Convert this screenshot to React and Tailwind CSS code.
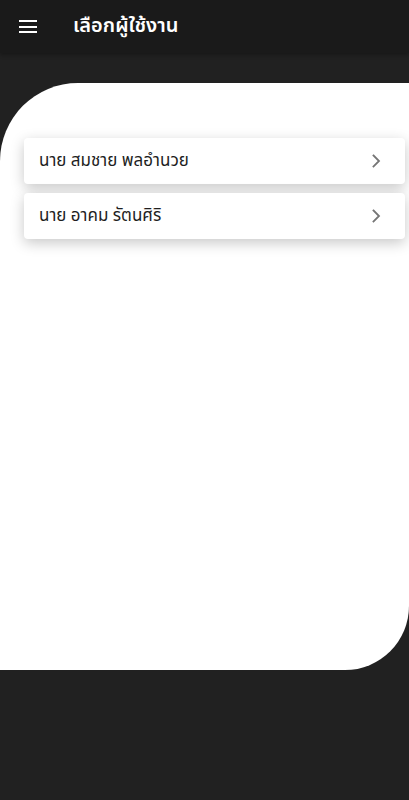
import React from "react";

function Chevron() {
  return (
    <svg width="10" height="14" viewBox="0 0 10 14" fill="none">
      <path d="M2.5 1.5 L8 7 L2.5 12.5" stroke="#757575" strokeWidth="1.8" strokeLinecap="square" />
    </svg>
  );
}

const users = ["นาย สมชาย พลอำนวย", "นาย อาคม รัตนศิริ"];

export default function App() {
  return (
    <div
      className="w-[409px] h-[800px] bg-[#212121] flex flex-col overflow-hidden"
      style={{ fontFamily: '"Noto Sans Thai", "Noto Sans Thai UI", "Noto Sans", sans-serif' }}
    >
      <div className="h-[53px] bg-[#1a1a1a] flex items-center shadow-[0_2px_4px_rgba(0,0,0,0.3)] relative z-10">
        <div className="w-[72px] pl-[19px] flex flex-col gap-[3.5px]">
          <div className="w-[18px] h-[2px] bg-white" />
          <div className="w-[18px] h-[2px] bg-white" />
          <div className="w-[18px] h-[2px] bg-white" />
        </div>
        <div className="text-white text-[20px] font-semibold leading-none pb-[2px] pl-[1px]">เลือกผู้ใช้งาน</div>
      </div>
      <div className="h-[30px]" />
      <div className="h-[587px] bg-white rounded-tl-[78px] rounded-br-[64px] pt-[55px] pl-[24px] pr-[4px] flex flex-col gap-[9px]">
        {users.map((u) => (
          <div
            key={u}
            className="h-[46px] bg-white rounded-[4px] shadow-[0_4px_14px_rgba(0,0,0,0.22)] flex items-center justify-between pl-[15px] pr-[24px]"
          >
            <span className="text-[17px] text-[#1e1e1e] font-normal pt-[1px]">{u}</span>
            <Chevron />
          </div>
        ))}
      </div>
    </div>
  );
}
